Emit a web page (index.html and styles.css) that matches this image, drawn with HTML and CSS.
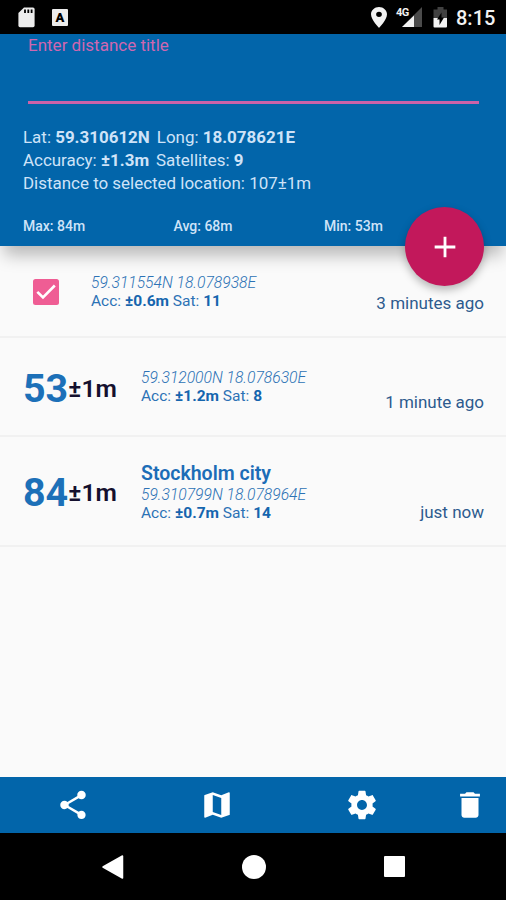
FILE: index.html
```html
<!DOCTYPE html>
<html lang="en">
<head>
<meta charset="utf-8">
<title>Distance</title>
<link rel="stylesheet" href="styles.css">
</head>
<body>
<div class="screen">
  <div class="status">
    <svg class="s-sd" width="17" height="21" viewBox="0 0 17 21"><path fill="#ececec" d="M6 .5h9a1.6 1.6 0 0 1 1.6 1.600v16.500a1.600 1.600 0 0 1-1.600 1.600h-13a1.600 1.600 0 0 1-1.600-1.600V6z"/><path stroke="#000" stroke-width="1.800" d="M7 2.500v3.500M10.300 2.500v3.500M13.600 2.500v3.500"/></svg>
    <span class="s-a"><b>A</b></span>
    <svg class="s-pin" width="16" height="21" viewBox="5 2 14 20" preserveAspectRatio="none"><path fill="#f2f2f2" d="M12 2C8.130 2 5 5.130 5 9c0 5.250 7 13 7 13s7-7.750 7-13c0-3.870-3.130-7-7-7zm0 9.500a2.500 2.500 0 0 1 0-5 2.500 2.500 0 0 1 0 5z"/></svg>
    <span class="s-net"><span class="s-4g">4G</span><svg width="22" height="21" viewBox="0 0 22 21"><path fill="#4b4b4b" d="M21 0v20H1z"/><path fill="#f2f2f2" d="M13 8.500V20H1z"/></svg></span>
    <svg class="s-bat" width="15" height="21" viewBox="0 0 15 21"><path fill="#414141" d="M4.500 0h6v2.500H14V11H.5V2.500h4z"/><path fill="#f2f2f2" d="M.5 11H14v8.500a1 1 0 0 1-1 1H1.500a1 1 0 0 1-1-1z"/><path fill="#000" d="M8.500 5.500v5H11L6.500 18v-5.500H4z"/></svg>
    <span class="s-time">8:15</span>
  </div>

  <header class="header">
    <div class="field"><label>Enter distance title</label></div>
    <div class="info">
      <div><span class="lat">Lat: <b>59.310612N</b></span><span>Long: <b>18.078621E</b></span></div>
      <div><span class="lat">Accuracy: <b>±1.3m</b></span><span>Satellites: <b>9</b></span></div>
      <div>Distance to selected location: 107±1m</div>
    </div>
    <div class="stats"><span>Max: 84m</span><span>Avg: 68m</span><span>Min: 53m</span></div>
    <div class="fab"><svg width="34" height="34" viewBox="0 0 24 24"><path fill="#fff" d="M19.300 13h-6.300v6.300h-2V13H4.700v-2H11V4.700h2V11h6.300z"/></svg></div>
  </header>

  <main class="list">
    <div class="row first">
      <svg class="check" width="26" height="26" viewBox="0 0 26 26"><rect width="26" height="26" rx="2.500" fill="#ef5d94"/><path d="M4.300 12.800l5.700 5.700L21.800 6.500" fill="none" stroke="#fff" stroke-width="2.600"/></svg>
      <div class="place"><i>59.311554N 18.078938E</i><div>Acc: <b>±0.6m</b> Sat: <b>11</b></div></div>
      <span class="ago">3 minutes ago</span>
    </div>
    <div class="row second">
      <div class="dist"><strong>53</strong><b>±1m</b></div>
      <div class="place"><i>59.312000N 18.078630E</i><div>Acc: <b>±1.2m</b> Sat: <b>8</b></div></div>
      <span class="ago">1 minute ago</span>
    </div>
    <div class="row third">
      <div class="dist"><strong>84</strong><b>±1m</b></div>
      <div class="place"><h2>Stockholm city</h2><i>59.310799N 18.078964E</i><div>Acc: <b>±0.7m</b> Sat: <b>14</b></div></div>
      <span class="ago">just now</span>
    </div>
  </main>

  <div class="tools">
    <svg viewBox="0 0 24 24"><path d="M18 16.080c-.76 0-1.440.3-1.960.77L8.910 12.700c.05-.23.09-.46.09-.7s-.04-.47-.09-.7l7.050-4.110c.54.5 1.250.81 2.040.81 1.660 0 3-1.340 3-3s-1.340-3-3-3-3 1.340-3 3c0 .24.04.47.09.7L8.040 9.810C7.500 9.310 6.790 9 6 9c-1.660 0-3 1.340-3 3s1.340 3 3 3c.79 0 1.500-.31 2.040-.81l7.120 4.160c-.05.21-.08.43-.08.65 0 1.610 1.310 2.920 2.920 2.920s2.920-1.310 2.920-2.920-1.310-2.920-2.920-2.920z"/></svg>
    <svg viewBox="0 0 24 24"><path d="M20.500 3l-.16.03L15 5.100 9 3 3.360 4.900c-.21.07-.36.25-.36.48V20.500c0 .28.22.5.5.5l.16-.03L9 18.900l6 2.100 5.640-1.900c.21-.07.36-.25.36-.48V3.500c0-.28-.22-.5-.5-.5zM15 19l-6-2.110V5l6 2.110V19z"/></svg>
    <svg viewBox="0 0 24 24"><path d="M19.430 12.980c.04-.32.07-.64.07-.98s-.03-.66-.07-.98l2.110-1.650c.19-.15.24-.42.12-.64l-2-3.460c-.12-.22-.39-.3-.61-.22l-2.490 1c-.52-.4-1.080-.73-1.690-.98l-.38-2.650C14.460 2.180 14.250 2 14 2h-4c-.25 0-.46.18-.49.42l-.38 2.650c-.61.25-1.170.59-1.690.98l-2.490-1c-.23-.09-.49 0-.61.22l-2 3.460c-.13.22-.07.49.12.64l2.110 1.650c-.04.32-.07.65-.07.98s.03.66.07.98l-2.110 1.650c-.19.15-.24.42-.12.64l2 3.460c.12.22.39.3.61.22l2.490-1c.52.4 1.080.73 1.690.98l.38 2.650c.03.24.24.42.49.42h4c.25 0 .46-.18.49-.42l.38-2.650c.61-.25 1.170-.59 1.690-.98l2.490 1c.23.09.49 0 .61-.22l2-3.460c.12-.22.07-.49-.12-.64l-2.110-1.650zM12 15.500c-1.930 0-3.500-1.570-3.500-3.500s1.570-3.500 3.500-3.500 3.500 1.570 3.500 3.500-1.570 3.500-3.500 3.500z"/></svg>
    <svg viewBox="0 0 24 24"><path d="M6 19c0 1.100.9 2 2 2h8c1.100 0 2-.9 2-2V7H6v12zM19 4h-3.500l-1-1h-5l-1 1H5v2h14V4z"/></svg>
  </div>
  <div class="nav">
    <svg width="24" height="26" viewBox="0 0 24 26"><path d="M2 13L21.500 2v22z" fill="#fff" stroke="#fff" stroke-width="1.500" stroke-linejoin="round"/></svg>
    <span class="home"></span>
    <span class="recent"></span>
  </div>
</div>
</body>
</html>
```

FILE: styles.css
```css
* { box-sizing: border-box; }
body { margin: 0; font-family: Roboto, "Liberation Sans", sans-serif; background: #fafafa; }
svg { display: block; flex: none; }
.screen { width: 506px; height: 900px; display: flex; flex-direction: column; overflow: hidden; }

.status { height: 34px; flex: none; background: #000; color: #f2f2f2; display: flex; align-items: flex-start; padding: 7px 0 0 18px; }
.s-a { flex: none; width: 16px; height: 17px; margin: 2px 0 0 17px; background: #ececec; border-radius: 1px; color: #000; font-size: 13px; line-height: 17px; text-align: center; }
.s-a b { font-weight: 900; }
.s-pin { margin-left: 303px; }
.s-net { position: relative; margin-left: 14px; }
.s-4g { position: absolute; left: -5px; top: 0; font-size: 11px; line-height: 11px; font-weight: 700; letter-spacing: -.5px; }
.s-bat { margin-left: 10px; }
.s-time { margin-left: 8px; font-size: 20px; line-height: 23px; font-weight: 500; }

.header { position: relative; z-index: 1; height: 212px; flex: none; background: #0265aa; color: #cfe3f8; padding: 0 23px; box-shadow: 0 13px 16px -4px rgba(0,0,0,.27); }
.field { height: 70px; margin: 0 4px 0 5px; padding-top: 1px; border-bottom: 3px solid #cb62a8; color: #cf67b0; font-size: 17px; line-height: 20px; }
.info { margin-top: 22px; font-size: 16.950px; line-height: 23px; white-space: nowrap; }
.info b { font-weight: 700; }
.lat { margin-right: 7px; }
.stats { display: grid; grid-template-columns: repeat(3, 150.500px); margin-top: 20px; font-size: 14px; line-height: 22px; font-weight: 500; }
.fab { position: absolute; left: 405px; top: 173px; width: 79px; height: 79px; border-radius: 50%; background: #c2185b; display: flex; align-items: center; justify-content: center; box-shadow: 0 4px 9px rgba(0,0,0,.28); }

.list { flex: 1; color: #2c72b5; }
.row { display: flex; align-items: flex-start; border-bottom: 2px solid #f1f1f1; padding-right: 22px; }
.first { height: 92px; padding-left: 33px; }
.second { height: 99px; padding-left: 23px; }
.third { height: 110px; padding-left: 23px; }
.check { margin-top: 33px; }
.first .place { margin: 28px 0 0 32px; }
.second .place { margin-top: 31px; }
.third .place { margin-top: 26px; }
.place { font-size: 15.650px; line-height: 18px; white-space: nowrap; }
.place i { display: block; font-weight: 300; }
.place div { font-size: 15.500px; line-height: 19px; }
.place b { color: #1565ae; font-weight: 700; }
.place h2 { margin: 0 0 1px; font-size: 19.500px; line-height: 22px; font-weight: 600; color: #1c6db7; }
.dist { width: 118px; display: flex; align-items: center; white-space: nowrap; color: #14102e; font-size: 24.600px; line-height: 46px; margin-top: 28px; }
.third .dist { margin-top: 33px; }
.dist strong { font-size: 39.400px; font-weight: 700; color: #1c70b8; }
.dist b { font-weight: 600; }
.ago { margin-left: auto; font-size: 17px; line-height: 20px; color: #2d5a8e; }
.first .ago { margin-top: 47px; }
.second .ago { margin-top: 54px; }
.third .ago { margin-top: 65px; }

.tools { height: 56px; flex: none; background: #0265aa; display: flex; justify-content: space-between; align-items: center; padding: 0 19px 0 56px; }
.tools svg { width: 34px; height: 34px; fill: #fff; }
.tools svg:nth-child(3) { margin-right: -36px; }
.nav { height: 67px; flex: none; background: #000; display: flex; align-items: center; padding-left: 101px; }
.home { width: 24px; height: 24px; border-radius: 50%; background: #fff; margin-left: 117px; }
.recent { width: 21px; height: 21px; border-radius: 1px; background: #fff; margin-left: 118px; }
```
